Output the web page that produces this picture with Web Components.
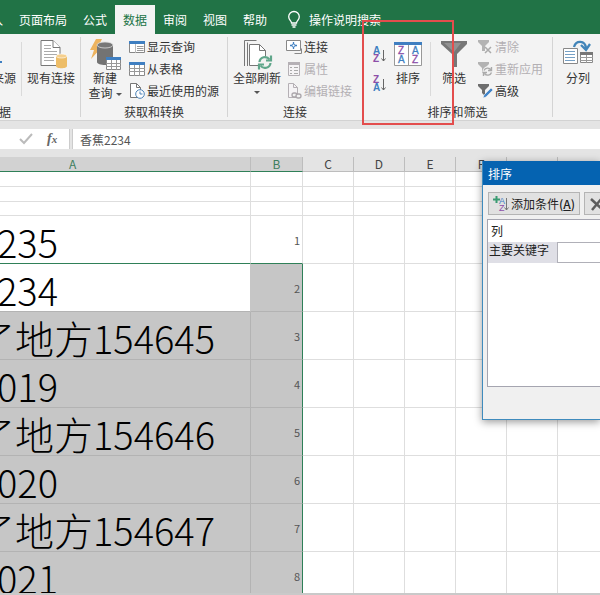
<!DOCTYPE html>
<html lang="zh-CN">
<head>
<meta charset="utf-8">
<title>排序</title>
<style>
html, body { height: 100%; }
body { margin: 0; overflow: hidden; font: 12px/16px "Noto Sans CJK SC", sans-serif; color: #333; background: #fff; }
</style>
</head>
<body>
<xl-app></xl-app>
<script>
const define = (name, html, setup) => customElements.define(name, class extends HTMLElement {
  constructor() {
    super();
    const t = document.createElement('template');
    t.innerHTML = html;
    this.attachShadow({ mode: 'open' }).append(t.content.cloneNode(true));
  }
  connectedCallback() { if (setup) setup(this, this.shadowRoot); }
});

const azLetters = (a, b, ca, cb) => `<g font-family="Liberation Sans, sans-serif" font-weight="bold" font-size="10"><text x="0" y="7" fill="${ca}">${a}</text><text x="0" y="15" fill="${cb}">${b}</text></g><path d="M10.500 3v11M8.500 11.500l2 2.500 2-2.500" stroke="#666" fill="none"/>`;
const page = (x, y, c) => `<path d="M${x} ${y}h12l7 7v18h-19z" fill="#fff" stroke="${c}"/><path d="M${x + 12} ${y}v7h7" fill="#fff" stroke="${c}"/>`;
const ICONS = {
  bulb: [14, 18, `<g fill="none" stroke="#fff" stroke-width="1.300"><path d="M4.500 12c0-2-2.800-3-2.800-6.200A5.300 5.300 0 0 1 12.300 5.800C12.300 9 9.500 10 9.500 12z"/><path d="M4.500 14h5M5.500 16h3"/></g>`],
  existing: [32, 32, page(6, 2.5, '#777') + `<path d="M9 7.500h7M9 10.500h7M9 13.500h13M9 16.500h13M9 19.500h10M9 22.500h10" stroke="#aaa"/><path d="M21 18v10c0 3 11 3 11 0V18z" fill="#edbd68"/><ellipse cx="26.500" cy="18" rx="5.500" ry="2" fill="#f5cf8c" stroke="#fff" stroke-width=".6"/>`],
  query: [32, 32, `<path d="M7 1h6l-4 8h4L2 21l3-9H1z" fill="#edb35e"/><path d="M8 7v17c0 4 16 4 16 0V7z" fill="#737373"/><ellipse cx="16" cy="7" rx="8" ry="3" fill="#777" stroke="#ddd" stroke-width=".8"/><path d="M17.500 19.500h14v12h-14z" fill="#fff" stroke="#888"/><path d="M17 19h15v3H17z" fill="#3f7fc1"/><path d="M17 25.500h15M17 28.500h15M22.500 22v10M27.500 22v10" stroke="#999"/>`],
  refresh: [32, 32, `<path d="M3.500 28V2.500h12M6.500 28V4.500" fill="none" stroke="#777"/><path d="M8.500 6.500h10l6 6v15h-16z" fill="#fff" stroke="#777"/><path d="M18.500 6.500v6h6" fill="none" stroke="#777"/><circle cx="24" cy="25" r="7" fill="#f1f1f1"/><g fill="none" stroke="#5fa68a" stroke-width="2.200"><path d="M18.500 24a5.500 5.500 0 0 1 10-2.500M29.500 25a5.500 5.500 0 0 1-10 2.500"/><path d="M30 17.500v5h-5M18 31.500v-5h5"/></g>`],
  showq: [16, 16, `<path d="M.5 2.500h15v11H.5z" fill="#fff" stroke="#888"/><path d="M0 2h16v3H0z" fill="#3f7fc1"/><path d="M8 7.500h6.500M8 9.500h6.500M8 11.500h6.500" stroke="#999"/><path d="M6.500 5v9" stroke="#bbb"/>`],
  table: [16, 16, `<path d="M.5 1.500h15v13H.5z" fill="#fff" stroke="#888"/><path d="M0 1h16v3H0z" fill="#3f7fc1"/><path d="M0 7.500h16M0 10.500h16M5.500 4v11M10.500 4v11" stroke="#999"/>`],
  recent: [16, 16, `<path d="M1.500.5h6l4 4v10h-10z" fill="#fff" stroke="#777"/><path d="M7.500.5v4h4" fill="none" stroke="#777"/><circle cx="11" cy="11" r="4.300" fill="#fff" stroke="#4c83b8"/><path d="M11 8.500V11h2.500" fill="none" stroke="#4c83b8"/>`],
  conn: [16, 16, `<path d="M.5 1.500h14v10H.5z" fill="#fff" stroke="#888"/><path d="M8.500 14.500h7v-5" fill="none" stroke="#888"/><g fill="none" stroke="#3f7fc1" stroke-width="1.300"><path d="M7.500 3v7M4 6.500h7"/></g><circle cx="7.500" cy="6.500" r="1.500" fill="#fff" stroke="#3f7fc1"/>`],
  props: [16, 16, `<path d="M2.500 1.500h11v13h-11z" fill="#f5f3f5" stroke="#b5b0b5"/><path d="M2 1h12v3H2z" fill="#b5b0b5"/><path d="M4 6.500h2M8 6.500h4M4 9.500h2M8 9.500h4M4 12.500h2M8 12.500h4" stroke="#aaa"/>`],
  editl: [16, 16, `<path d="M2.500.5h5l4 4v10h-9z" fill="#f5f3f5" stroke="#b5b0b5"/><path d="M7.500.5v4h4" fill="none" stroke="#b5b0b5"/><g fill="#f1f1f1" stroke="#aaa5aa" stroke-width="1.300"><rect x="6" y="10" width="5" height="4" rx="2"/><rect x="10" y="11" width="5" height="4" rx="2"/></g>`],
  az: [14, 16, azLetters('A', 'Z', '#3f7fc1', '#8d4fa8')],
  za: [14, 16, azLetters('Z', 'A', '#8d4fa8', '#3f7fc1')],
  sort: [32, 32, `<path d="M2.500 4.500h27v23h-27z" fill="#fff" stroke="#999"/><path d="M2 4h28v3H2z" fill="#3f7fc1"/><path d="M16.500 7v20" stroke="#999"/><g font-family="Liberation Sans, sans-serif" font-size="10" stroke-width=".3"><text x="6" y="16" fill="#8d4fa8" stroke="#8d4fa8">Z</text><text x="6" y="25" fill="#3f7fc1" stroke="#3f7fc1">A</text><text x="20" y="16" fill="#3f7fc1" stroke="#3f7fc1">A</text><text x="20" y="25" fill="#8d4fa8" stroke="#8d4fa8">Z</text></g>`],
  filter: [32, 32, `<path d="M3 3h26v3L19 16v13h-5V16L3 6z" fill="#777"/><path d="M6 5h17l-7 9z" fill="#929292"/>`],
  clear: [16, 16, `<path d="M1 1h11v2L8 7v5H5V7L1 3z" fill="#b3b3b3"/><path d="M8 8l6 6M14 8l-6 6" stroke="#aaa" stroke-width="1.500"/>`],
  reapply: [16, 16, `<path d="M1 1h11v2L8 7v5H5V7L1 3z" fill="#b3b3b3"/><circle cx="10.500" cy="10.500" r="5" fill="#f1f1f1"/><path d="M7 9.500a4 4 0 0 1 7-.5M14.500 6v3.500H11M14.500 11.500a4 4 0 0 1-7 1M6.500 15v-3.500H10" fill="none" stroke="#aaa" stroke-width="1.400"/>`],
  adv: [16, 16, `<path d="M1 1h11v2L8 7v6L5 10V7L1 3z" fill="#6d6d6d"/><path d="M6 15l1-3 7-7 2 2-7 7z" fill="#4285c9" stroke="#f1f1f1" stroke-width=".6"/>`],
  split: [32, 32, `<path d="M1.500 10.500h14v15h-14z" fill="#fff" stroke="#888"/><path d="M3 13.500h10M3 16.500h10M3 19.500h10M3 22.500h10" stroke="#76a0c5"/><path d="M18.500 14.500h12v10h-12z" fill="#fff" stroke="#888"/><path d="M18 14h13v3H18z" fill="#777"/><path d="M18 19.500h13M18 22.500h13M24.500 17v8" stroke="#999"/><path d="M12 9c2-7 11-7 12 1M19 7l5 5 4-6" fill="none" stroke="#4285b9" stroke-width="2.300"/>`],
  tick: [14, 14, `<path d="M1 7l4 4 8-9" fill="none" stroke="#bbb" stroke-width="2"/>`],
  addsort: [16, 16, `<path d="M3.500 0v7M0 3.500h7" stroke="#3a9b72" stroke-width="2"/><g font-family="Liberation Sans, sans-serif" font-size="9"><text x="6" y="8" fill="#3f7fc1">A</text><text x="6" y="15" fill="#8d4fa8">Z</text></g><path d="M13.500 2v12M11.500 11.500l2 2.500 2-2.500" stroke="#777" fill="none"/>`],
  cross: [16, 16, `<path d="M2 3l12 11M13 2L3 14" stroke="#5c5c5c" stroke-width="2.500"/>`]
};

define('xl-icon', `<style>:host{display:block;flex:none}svg{display:block;overflow:visible}</style>`, (el, root) => {
  const [w, h, body] = ICONS[el.getAttribute('name')];
  root.innerHTML += `<svg width="${w}" height="${h}" viewBox="0 0 ${w} ${h}" aria-hidden="true">${body}</svg>`;
});

define('xl-tab', `<style>
:host{display:flex;flex:none}
button{all:unset;display:flex;align-items:center;gap:8px;padding:0 8px;color:#fff;font:inherit;white-space:nowrap;cursor:pointer}
:host([active]) button{background:#f3f3f3;color:#217346}
</style><button role="tab"><slot></slot></button>`);

define('xl-tabs', `<style>
:host{display:flex;flex:none;height:29px;padding-top:5px;background:#217346;overflow:hidden}
div{display:flex;margin-left:-29px}
xl-tab.tell{margin-left:4px;color:#dcebe2}
</style>
<div role="tablist"><xl-tab>插入</xl-tab><xl-tab>页面布局</xl-tab><xl-tab>公式</xl-tab><xl-tab active>数据</xl-tab><xl-tab>审阅</xl-tab><xl-tab>视图</xl-tab><xl-tab>帮助</xl-tab><xl-tab class="tell"><xl-icon name="bulb"></xl-icon>操作说明搜索</xl-tab></div>`);

define('xl-big', `<style>
:host{display:block;flex:none}
button{all:unset;display:flex;flex-direction:column;align-items:center;width:100%;padding-top:4px;text-align:center;line-height:15px;white-space:nowrap;cursor:pointer}
</style><button><i></i><slot></slot></button>`, (el, root) => {
  root.querySelector('i').outerHTML = `<xl-icon name="${el.getAttribute('icon')}"></xl-icon>`;
});

define('xl-small', `<style>
:host{display:block}
button{all:unset;display:flex;align-items:center;gap:2px;height:22px;white-space:nowrap;cursor:pointer}
button:disabled{color:#b3b0b3}
</style><button><i></i><slot></slot></button>`, (el, root) => {
  root.querySelector('i').outerHTML = `<xl-icon name="${el.getAttribute('icon')}"></xl-icon>`;
  root.querySelector('button').disabled = el.hasAttribute('off');
});

define('xl-group', `<style>
:host{display:flex;flex-direction:column;flex:none;box-sizing:border-box;padding-right:1px;background:linear-gradient(#d4d4d4,#d4d4d4) right 0 top 3px/1px 80px no-repeat}
.row{display:flex;height:71px}
.label{text-align:center;white-space:nowrap}
</style><div class="row"><slot></slot></div><div class="label"><slot name="label"></slot></div>`);

define('xl-ribbon', `<style>
:host{display:flex;flex:none;height:86px;background:#f3f3f3;overflow:hidden;border-bottom:1px solid #d2d2d2}
.g1{width:81px}.g2{width:147px}.g3{width:135px}.g4{width:190px}.g5{flex:1;background:none}
.rule{width:1px;height:54px;margin-top:8px;background:#dadada;flex:none}
.stack{padding-top:2px}
.cut{width:21px;display:flex;justify-content:flex-end;padding:36px 5px 0 0;box-sizing:border-box;white-space:nowrap;line-height:15px;background:linear-gradient(#3f7fc1,#3f7fc1) 0 27px/2px 2px no-repeat}
.g1 .end{display:flex;justify-content:flex-end;width:11px}
.exist{width:58px}.new{width:48px}.all{width:58px}.sort{width:44px}.filt{width:46px}.split{width:50px}
.order{display:flex;flex-direction:column;gap:13px;padding:13px 0 0 10px;width:13px}
.order button{all:unset;display:block;height:16px;cursor:pointer}
.caret{display:inline-block;border:3px solid transparent;border-top-color:#555;border-bottom:0;vertical-align:middle;margin-left:3px}
.below{margin:6px 0 0}
</style>
<xl-group class="g1"><span class="cut">来源</span><span class="rule"></span><xl-big class="exist" icon="existing">现有连接</xl-big><span slot="label" class="end">获取外部数据</span></xl-group>
<xl-group class="g2"><xl-big class="new" icon="query"><span>新建<br>查询<i class="caret"></i></span></xl-big><div class="stack"><xl-small icon="showq">显示查询</xl-small><xl-small icon="table">从表格</xl-small><xl-small icon="recent">最近使用的源</xl-small></div><span slot="label">获取和转换</span></xl-group>
<xl-group class="g3"><xl-big class="all" icon="refresh">全部刷新<i class="caret below"></i></xl-big><div class="stack"><xl-small icon="conn">连接</xl-small><xl-small icon="props" off>属性</xl-small><xl-small icon="editl" off>编辑链接</xl-small></div><span slot="label">连接</span></xl-group>
<xl-group class="g4"><div class="order"><button aria-label="升序"><xl-icon name="az"></xl-icon></button><button aria-label="降序"><xl-icon name="za"></xl-icon></button></div><xl-big class="sort" icon="sort">排序</xl-big><span class="rule"></span><xl-big class="filt" icon="filter">筛选</xl-big><div class="stack"><xl-small icon="clear" off>清除</xl-small><xl-small icon="reapply" off>重新应用</xl-small><xl-small icon="adv">高级</xl-small></div><span slot="label">排序和筛选</span></xl-group>
<xl-group class="g5"><xl-big class="split" icon="split">分列</xl-big></xl-group>`);

define('xl-formula', `<style>
:host{display:flex;flex:none;height:20px;padding:8px 0;background:#e4e4e4}
.tools{display:flex;align-items:center;gap:14px;width:50px;padding-left:19px;background:#fff;border-right:1px solid #ccc;flex:none}
button{all:unset;cursor:pointer}
.fx{font:italic bold 14px "Liberation Serif",serif;color:#666}
.fx small{font-size:11px}
input{flex:1;min-width:0;margin-left:2px;border:0;border-left:1px solid #ccc;padding:0 7px;font:12px "Noto Sans CJK SC",sans-serif;color:#555;background:#fff;outline:0}
</style>
<div class="tools"><button aria-label="输入"><xl-icon name="tick"></xl-icon></button><button class="fx" aria-label="插入函数">f<small>x</small></button></div>
<input aria-label="编辑栏" value="香蕉2234">`);

define('xl-sheet', `<style>
:host{display:block;flex:1;min-height:0;overflow:hidden;background:#fff;border-bottom:2px solid #c9c9c9}
table{table-layout:fixed;width:100%;min-width:609px;border-spacing:0}
col.a{width:251px}col.b{width:52px}col.c{width:51px}
th,td{box-sizing:border-box;padding:0;border-right:1px solid #dedede;border-bottom:1px solid #dedede;overflow:hidden;white-space:nowrap}
th{height:15px;line-height:14px;font-weight:400;background:#e4e4e4;border-color:#bdbdbd;color:#444}
th.on{background:#d2d2d2;color:#3f7f5f;border-bottom-color:#2f8058}
th:first-child{text-align:left;padding-left:69px}
.thin td{height:15px}.thin.last td{height:14px}
.tall td{height:48px}
.tall td:first-child{font-size:38px;line-height:42px;color:#000;font-weight:300;padding-top:5px;text-indent:-3px}
.tall .long:first-child{text-indent:-24px}
.cjk{font-size:39px;line-height:0}
.tall td:nth-child(2){text-align:right;padding-right:2px;font-size:11px;color:#555}
.top td:nth-child(-n+2){border-bottom-color:#2f8058}
.sel td:nth-child(-n+2){background:#c6c6c6;border-color:#b3b3b3}
.sel td:nth-child(2){border-right-color:#2f8058}
.sel.cur td:first-child{background:#fff;border-right-color:#c6c6c6}
</style><table><colgroup><col class="a"><col class="b"><col class="c"><col class="c"><col class="c"><col class="c"><col class="c"><col></colgroup>
<thead><tr><th class="on">A</th><th class="on">B</th><th>C</th><th>D</th><th>E</th><th>F</th><th></th><th></th></tr></thead><tbody></tbody></table>`, (el, root) => {
  const rest = '<td></td>'.repeat(6);
  const rows = ['235', '234', '了地方154645', '019', '了地方154646', '020', '了地方154647', '021'];
  root.querySelector('tbody').innerHTML =
    `<tr class="thin"><td></td><td></td>${rest}</tr>`.repeat(2) + `<tr class="thin last"><td></td><td></td>${rest}</tr>` +
    rows.map((r, i) => `<tr class="tall ${i === 0 ? 'top' : i === 1 ? 'sel cur' : 'sel'}"><td${r.length > 3 ? ' class="long"' : ''}>${r.replace('了地方', '<span class="cjk">了地方</span>')}</td><td>${i + 1}</td>${rest}</tr>`).join('');
});

define('xl-sort-dialog', `<style>
:host{display:flex;flex-direction:column;box-sizing:border-box;background:#f0f0f0;border:solid #3f8bbd;border-width:0 0 1px 1px;box-shadow:0 2px 8px rgba(0,0,0,.4);color:#222}
header{height:24px;line-height:25px;padding-left:5px;background:#0563b1;color:#fff}
.bar{display:flex;gap:4px;padding:7px 0 4px 5px;overflow:hidden}
.bar button{display:flex;align-items:center;gap:2px;box-sizing:border-box;height:23px;padding:0 4px;border:1px solid #b4b4b4;background:#e1e1e1;font:12px "Noto Sans CJK SC",sans-serif;color:#222;white-space:nowrap;flex:none}
.bar button:last-child{flex:1 0 30px}
b{font-weight:500}
.list{flex:1;margin:0 0 32px 4px;border:solid #a5a5b0;border-width:1px 0 1px 1px;background:#fff}
.head{height:22px;line-height:22px;padding-left:3px}
.key{display:flex;height:21px}
label{width:69px;line-height:16px;padding-left:1px;box-sizing:border-box;background:#dfdfe6;flex:none;white-space:nowrap}
select{appearance:none;flex:1;min-width:0;border:1px solid #b0b0b8;border-right:0;border-radius:0;background:#fff;padding:0}
</style>
<header>排序</header>
<div class="bar"><button><xl-icon name="addsort"></xl-icon><span>添加条件<b>(<u>A</u>)</b></span></button><button aria-label="删除条件"><xl-icon name="cross"></xl-icon></button></div>
<div class="list"><div class="head">列</div><div class="key"><label for="k">主要关键字</label><select id="k"><option></option></select></div></div>`);

define('xl-app', `<style>
:host{display:flex;flex-direction:column;height:100vh;position:relative;overflow:hidden}
.mark{position:absolute;left:362px;top:20px;width:92px;height:105px;box-sizing:border-box;border:2px solid #e34d4d;pointer-events:none}
xl-sort-dialog{position:absolute;left:482px;right:0;top:161px;height:259px}
</style>
<xl-tabs></xl-tabs><xl-ribbon></xl-ribbon><xl-formula></xl-formula><xl-sheet></xl-sheet>
<xl-sort-dialog role="dialog" aria-label="排序"></xl-sort-dialog><div class="mark"></div>`);
</script>
</body>
</html>
